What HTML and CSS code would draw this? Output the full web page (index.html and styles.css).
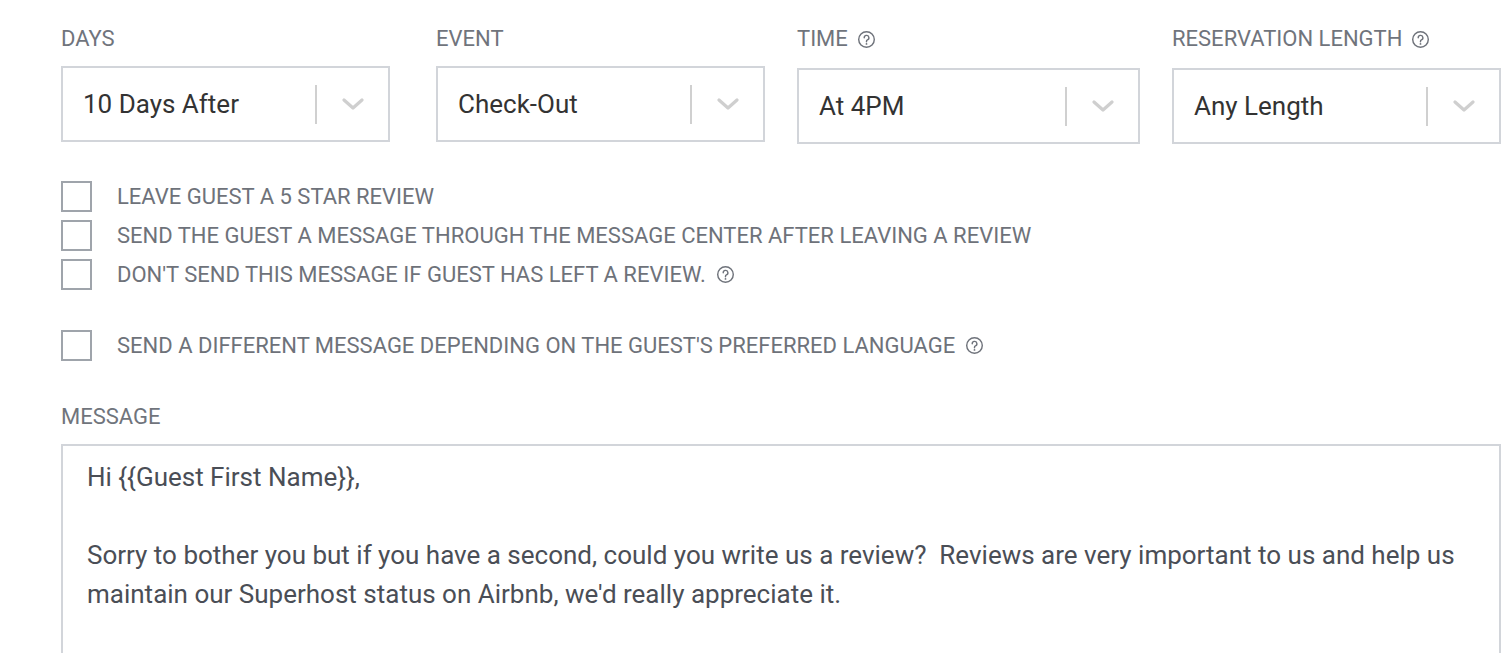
FILE: index.html
```html
<!DOCTYPE html>
<html lang="en">
<head>
<meta charset="utf-8">
<title>Message rule</title>
<link rel="stylesheet" href="styles.css">
</head>
<body>
<div class="page">
  <div class="fields">
    <div class="field field-first">
      <div class="label">DAYS</div>
      <div class="select">
        <span class="value">10 Days After</span>
        <span class="indicator"><svg class="chev" viewBox="0 0 22 12" width="22" height="12"><path d="M2 2 L11 10 L20 2" fill="none" stroke="#cfcfcf" stroke-width="3.2" stroke-linecap="round" stroke-linejoin="round"/></svg></span>
      </div>
    </div>
    <div class="field">
      <div class="label">EVENT</div>
      <div class="select">
        <span class="value">Check-Out</span>
        <span class="indicator"><svg class="chev" viewBox="0 0 22 12" width="22" height="12"><path d="M2 2 L11 10 L20 2" fill="none" stroke="#cfcfcf" stroke-width="3.2" stroke-linecap="round" stroke-linejoin="round"/></svg></span>
      </div>
    </div>
    <div class="field field-wide">
      <div class="label label-help">TIME <svg class="help" viewBox="0 0 20 20" width="19" height="19"><circle cx="10" cy="10" r="8.2" fill="none" stroke="#6f737b" stroke-width="1.5"/><path d="M7.6 8.1a2.45 2.45 0 1 1 3.4 2.25c-.65.3-1 .75-1 1.4v.7" fill="none" stroke="#6f737b" stroke-width="1.5" stroke-linecap="round"/><circle cx="10" cy="14.7" r="0.95" fill="#6f737b"/></svg></div>
      <div class="select">
        <span class="value">At 4PM</span>
        <span class="indicator"><svg class="chev" viewBox="0 0 22 12" width="22" height="12"><path d="M2 2 L11 10 L20 2" fill="none" stroke="#cfcfcf" stroke-width="3.2" stroke-linecap="round" stroke-linejoin="round"/></svg></span>
      </div>
    </div>
    <div class="field">
      <div class="label label-help">RESERVATION LENGTH <svg class="help" viewBox="0 0 20 20" width="19" height="19"><circle cx="10" cy="10" r="8.2" fill="none" stroke="#6f737b" stroke-width="1.5"/><path d="M7.6 8.1a2.45 2.45 0 1 1 3.4 2.25c-.65.3-1 .75-1 1.4v.7" fill="none" stroke="#6f737b" stroke-width="1.5" stroke-linecap="round"/><circle cx="10" cy="14.7" r="0.95" fill="#6f737b"/></svg></div>
      <div class="select">
        <span class="value">Any Length</span>
        <span class="indicator"><svg class="chev" viewBox="0 0 22 12" width="22" height="12"><path d="M2 2 L11 10 L20 2" fill="none" stroke="#cfcfcf" stroke-width="3.2" stroke-linecap="round" stroke-linejoin="round"/></svg></span>
      </div>
    </div>
  </div>

  <div class="checks">
    <label class="check"><span class="box"></span><span class="check-text">LEAVE GUEST A 5 STAR REVIEW</span></label>
    <label class="check"><span class="box"></span><span class="check-text">SEND THE GUEST A MESSAGE THROUGH THE MESSAGE CENTER AFTER LEAVING A REVIEW</span></label>
    <label class="check"><span class="box"></span><span class="check-text">DON'T SEND THIS MESSAGE IF GUEST HAS LEFT A REVIEW.</span><svg class="help" viewBox="0 0 20 20" width="19" height="19"><circle cx="10" cy="10" r="8.2" fill="none" stroke="#6f737b" stroke-width="1.5"/><path d="M7.6 8.1a2.45 2.45 0 1 1 3.4 2.25c-.65.3-1 .75-1 1.4v.7" fill="none" stroke="#6f737b" stroke-width="1.5" stroke-linecap="round"/><circle cx="10" cy="14.7" r="0.95" fill="#6f737b"/></svg></label>
  </div>

  <div class="checks checks-lang">
    <label class="check"><span class="box"></span><span class="check-text">SEND A DIFFERENT MESSAGE DEPENDING ON THE GUEST'S PREFERRED LANGUAGE</span><svg class="help" viewBox="0 0 20 20" width="19" height="19"><circle cx="10" cy="10" r="8.2" fill="none" stroke="#6f737b" stroke-width="1.5"/><path d="M7.6 8.1a2.45 2.45 0 1 1 3.4 2.25c-.65.3-1 .75-1 1.4v.7" fill="none" stroke="#6f737b" stroke-width="1.5" stroke-linecap="round"/><circle cx="10" cy="14.7" r="0.95" fill="#6f737b"/></svg></label>
  </div>

  <div class="message-block">
    <div class="label">MESSAGE</div>
    <div class="message">Hi {{Guest First Name}},

Sorry to bother you but if you have a second, could you write us a review?  Reviews are very important to us and help us maintain our Superhost status on Airbnb, we'd really appreciate it.

</div>
  </div>
</div>
</body>
</html>
```

FILE: styles.css
```css
html, body {
  margin: 0;
  padding: 0;
  background: #ffffff;
  overflow: hidden;
}

body {
  font-family: Roboto, "Liberation Sans", Arial, sans-serif;
  color: #333333;
}

.page {
  padding: 27px 0 0 61px;
  width: 1440px;
}

.fields {
  display: flex;
  column-gap: 32px;
}

.field {
  width: 329px;
  display: flex;
  flex-direction: column;
}

.field-first {
  margin-right: 14px;
}

.field-wide {
  width: 343px;
}

.label {
  font-size: 22px;
  line-height: 24px;
  height: 24px;
  color: #70747c;
  margin-bottom: 15px;
  display: flex;
  align-items: center;
  white-space: nowrap;
}

.label-help {
  margin-bottom: 17px;
}

.help {
  margin-left: 9px;
  flex: none;
}

.select {
  box-sizing: border-box;
  height: 76px;
  border: 2px solid #d2d5da;
  display: flex;
  align-items: center;
  padding-left: 20px;
}

.value {
  flex: 1;
  font-size: 26px;
  color: #333333;
  white-space: nowrap;
}

.indicator {
  width: 71px;
  height: 39px;
  border-left: 2px solid #d0d0d0;
  display: flex;
  align-items: center;
  justify-content: center;
}

.chev {
  display: block;
}

.checks {
  margin-top: 37px;
  display: flex;
  flex-direction: column;
  row-gap: 8px;
}

.checks-lang {
  margin-top: 40px;
}

.check {
  display: flex;
  align-items: center;
  height: 31px;
}

.box {
  box-sizing: border-box;
  width: 31px;
  height: 31px;
  border: 2px solid #9fa4ab;
  flex: none;
  margin-right: 25px;
}

.check-text {
  font-size: 22px;
  color: #6e727a;
  white-space: nowrap;
}

.check .help {
  margin-left: 10px;
}

.message-block {
  margin-top: 44px;
}

.message-block .label {
  margin-bottom: 15px;
}

.message {
  box-sizing: border-box;
  width: 1440px;
  height: 260px;
  border: 2px solid #d2d5da;
  padding: 12px 24px 0 24px;
  font-size: 26px;
  line-height: 39px;
  color: #4a4e56;
  white-space: pre-wrap;
}
```
